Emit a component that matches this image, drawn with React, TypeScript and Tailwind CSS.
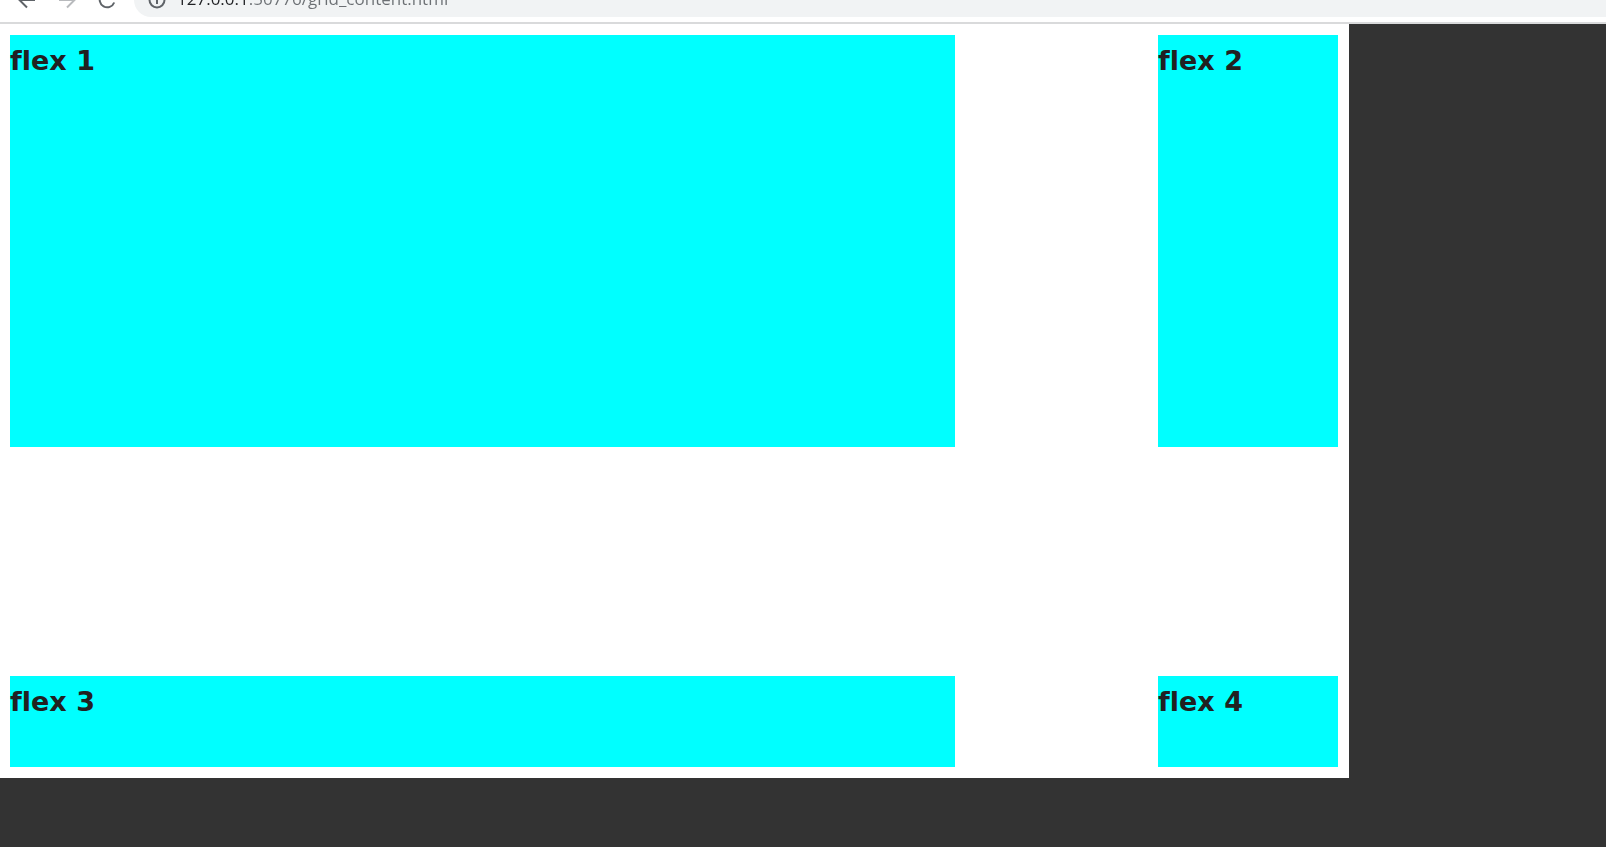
const icon = "block fill-none stroke-2";

function Toolbar() {
  return (
    <header className="h-6 overflow-hidden border-b-2 border-[#d9dadb] bg-white">
      <div className="flex h-full items-end pb-[5px] pl-[15px]">
        <nav className="flex h-[34px] shrink-0 items-center gap-4 pr-[15px]">
          <button type="button" aria-label="Back">
            <svg viewBox="0 0 24 24" className={`${icon} size-6 stroke-[#5f6368]`}>
              <path d="M20 12H5M12 4.5 4.5 12l7.500 7.500" />
            </svg>
          </button>
          <button type="button" aria-label="Forward">
            <svg viewBox="0 0 24 24" className={`${icon} size-6 stroke-[#b8babd]`}>
              <path d="M4 12h15M12 4.500 19.500 12 12 19.500" />
            </svg>
          </button>
          <button type="button" aria-label="Reload">
            <svg viewBox="0 0 24 24" className={`${icon} size-6 stroke-[#5f6368]`}>
              <path d="M19.200 14.500a7.500 7.500 0 1 1-1.700-8L20 9M20 3v6h-6" />
            </svg>
          </button>
        </nav>
        <div className="flex h-[34px] grow items-center gap-[11px] rounded-l-full bg-[#f1f3f4] pl-[14px]">
          <svg viewBox="0 0 18 18" aria-hidden="true" className={`${icon} size-[18px] shrink-0 stroke-[#5f6368]`}>
            <circle cx="9" cy="9" r="7.500" />
            <path d="M9 8v5M9 4.500v2" />
          </svg>
          <input
            type="text"
            aria-label="Address"
            defaultValue="127.0.0.1:50776/grid_content.html"
            className="h-[34px] min-w-0 grow bg-[linear-gradient(90deg,#202124_72px,#6b6f73_72px)] bg-clip-text pb-[3px] font-['Open_Sans',sans-serif] text-[17px] text-transparent caret-black outline-none"
          />
        </div>
      </div>
    </header>
  );
}

function Card({ title }: { title: string }) {
  return (
    <section className="bg-[#00ffff] pt-[10px]">
      <h2 className="font-['DejaVu_Sans',Verdana,sans-serif] text-[27px] leading-8 font-bold text-[#212121] [font-variant-ligatures:none]">
        {title}
      </h2>
    </section>
  );
}

export default function App() {
  return (
    <div className="min-h-screen bg-[#333333]">
      <Toolbar />
      <main className="grid w-[84%] grid-cols-[1fr_180px] grid-rows-[412px_91px] gap-x-[203px] gap-y-[229px] bg-white py-[11px] pr-[11px] pl-[10px]">
        <Card title="flex 1" />
        <Card title="flex 2" />
        <Card title="flex 3" />
        <Card title="flex 4" />
      </main>
    </div>
  );
}
